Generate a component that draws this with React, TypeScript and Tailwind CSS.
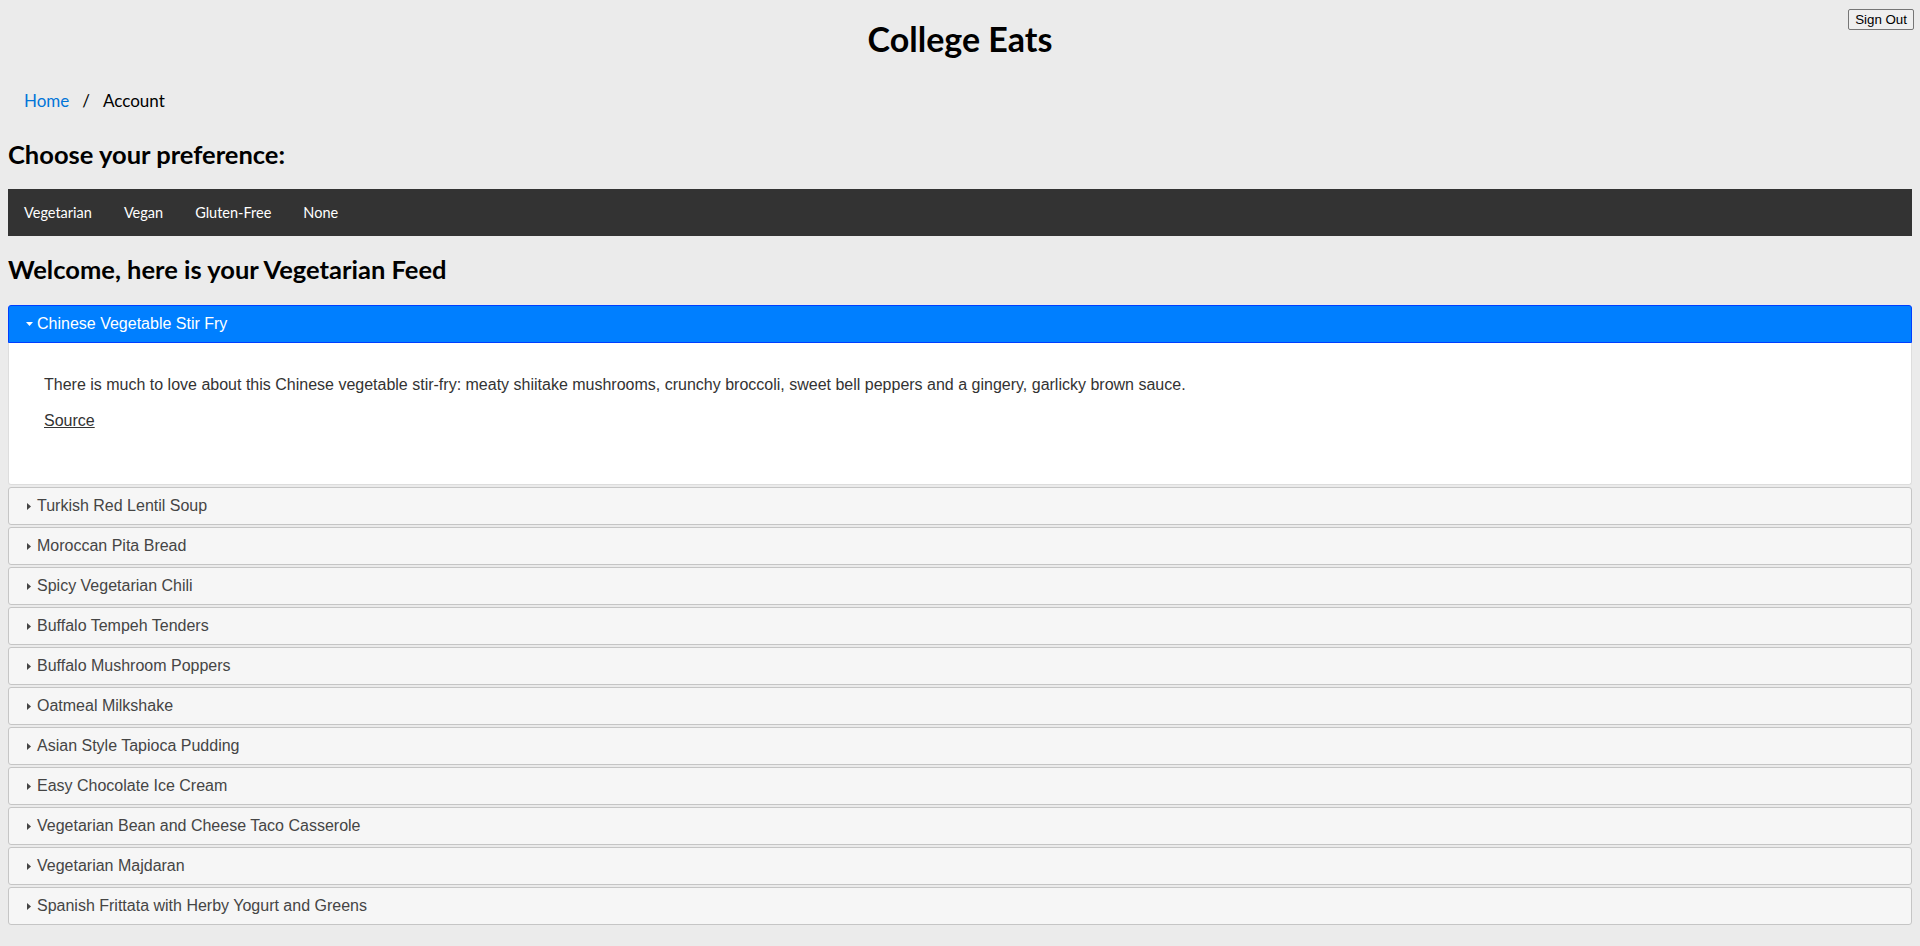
import React from "react";

const items = [
  "Turkish Red Lentil Soup",
  "Moroccan Pita Bread",
  "Spicy Vegetarian Chili",
  "Buffalo Tempeh Tenders",
  "Buffalo Mushroom Poppers",
  "Oatmeal Milkshake",
  "Asian Style Tapioca Pudding",
  "Easy Chocolate Ice Cream",
  "Vegetarian Bean and Cheese Taco Casserole",
  "Vegetarian Majdaran",
  "Spanish Frittata with Herby Yogurt and Greens",
];

function TriRight() {
  return (
    <span className="inline-flex w-[16px] h-[16px] items-center justify-center shrink-0">
      <svg width="4" height="7" viewBox="0 0 4 7">
        <polygon points="0,0 4,3.5 0,7" fill="#444444" />
      </svg>
    </span>
  );
}

function TriDown() {
  return (
    <span className="inline-flex w-[16px] h-[16px] items-center justify-center shrink-0">
      <svg width="7" height="4" viewBox="0 0 7 4">
        <polygon points="0,0 7,0 3.5,4" fill="#ffffff" />
      </svg>
    </span>
  );
}

export default function App() {
  const gill = "font-['Lato','Noto_Sans',sans-serif]";
  return (
    <div className="relative min-h-screen bg-[#ebebeb] text-black">
      <button className="absolute right-[6px] top-[9px] h-[21px] px-[6px] border border-[#767676] rounded-[2px] bg-[#efefef] text-[13.33px] leading-[15px] text-black font-['Liberation_Sans','Arial',sans-serif]">
        Sign Out
      </button>
      <div className="px-[8px] pb-[20px]">
        <h1 className={`${gill} pt-[20px] text-center text-[34px] font-bold leading-[38px]`}>
          College Eats
        </h1>
        <div className={`${gill} mt-[23px] px-[16px] py-[10px] flex items-center text-[17px] leading-[20px]`}>
          <a className="text-[#0275d8]">Home</a>
          <span className="px-[13px]">/</span>
          <span>Account</span>
        </div>
        <h2 className={`${gill} mt-[19px] text-[25.5px] font-bold leading-[29px]`}>
          Choose your preference:
        </h2>
        <nav className={`${gill} mt-[20px] h-[47px] bg-[#333333] flex`}>
          {["Vegetarian", "Vegan", "Gluten-Free", "None"].map((t) => (
            <a key={t} className="px-[16px] py-[14px] text-white text-[14.5px] leading-[19px]">
              {t}
            </a>
          ))}
        </nav>
        <h2 className={`${gill} mt-[19px] text-[25.5px] font-bold leading-[29px]`}>
          Welcome, here is your Vegetarian Feed
        </h2>
        <div className="mt-[21px] font-['Liberation_Sans','Arial',sans-serif]">
          <div className="flex items-center h-[38px] pl-[12px] pr-[8px] border border-[#003eff] bg-[#007fff] text-white text-[16px] leading-[20px] rounded-t-[3px]">
            <TriDown />
            <span>Chinese Vegetable Stir Fry</span>
          </div>
          <div className="border border-t-0 border-[#dddddd] bg-white text-[#333333] rounded-b-[3px] px-[35px] pt-[33px] pb-[54px] text-[16px] leading-[18px]">
            <p>
              There is much to love about this Chinese vegetable stir-fry: meaty shiitake mushrooms, crunchy broccoli, sweet bell peppers and a gingery, garlicky brown sauce.
            </p>
            <p className="mt-[18px]">
              <a className="underline text-[#333333]">Source</a>
            </p>
          </div>
          {items.map((t) => (
            <div
              key={t}
              className="mt-[2px] flex items-center h-[38px] pl-[12px] pr-[8px] border border-[#c5c5c5] bg-[#f6f6f6] text-[#454545] text-[16px] leading-[20px] rounded-[3px]"
            >
              <TriRight />
              <span>{t}</span>
            </div>
          ))}
        </div>
      </div>
    </div>
  );
}
